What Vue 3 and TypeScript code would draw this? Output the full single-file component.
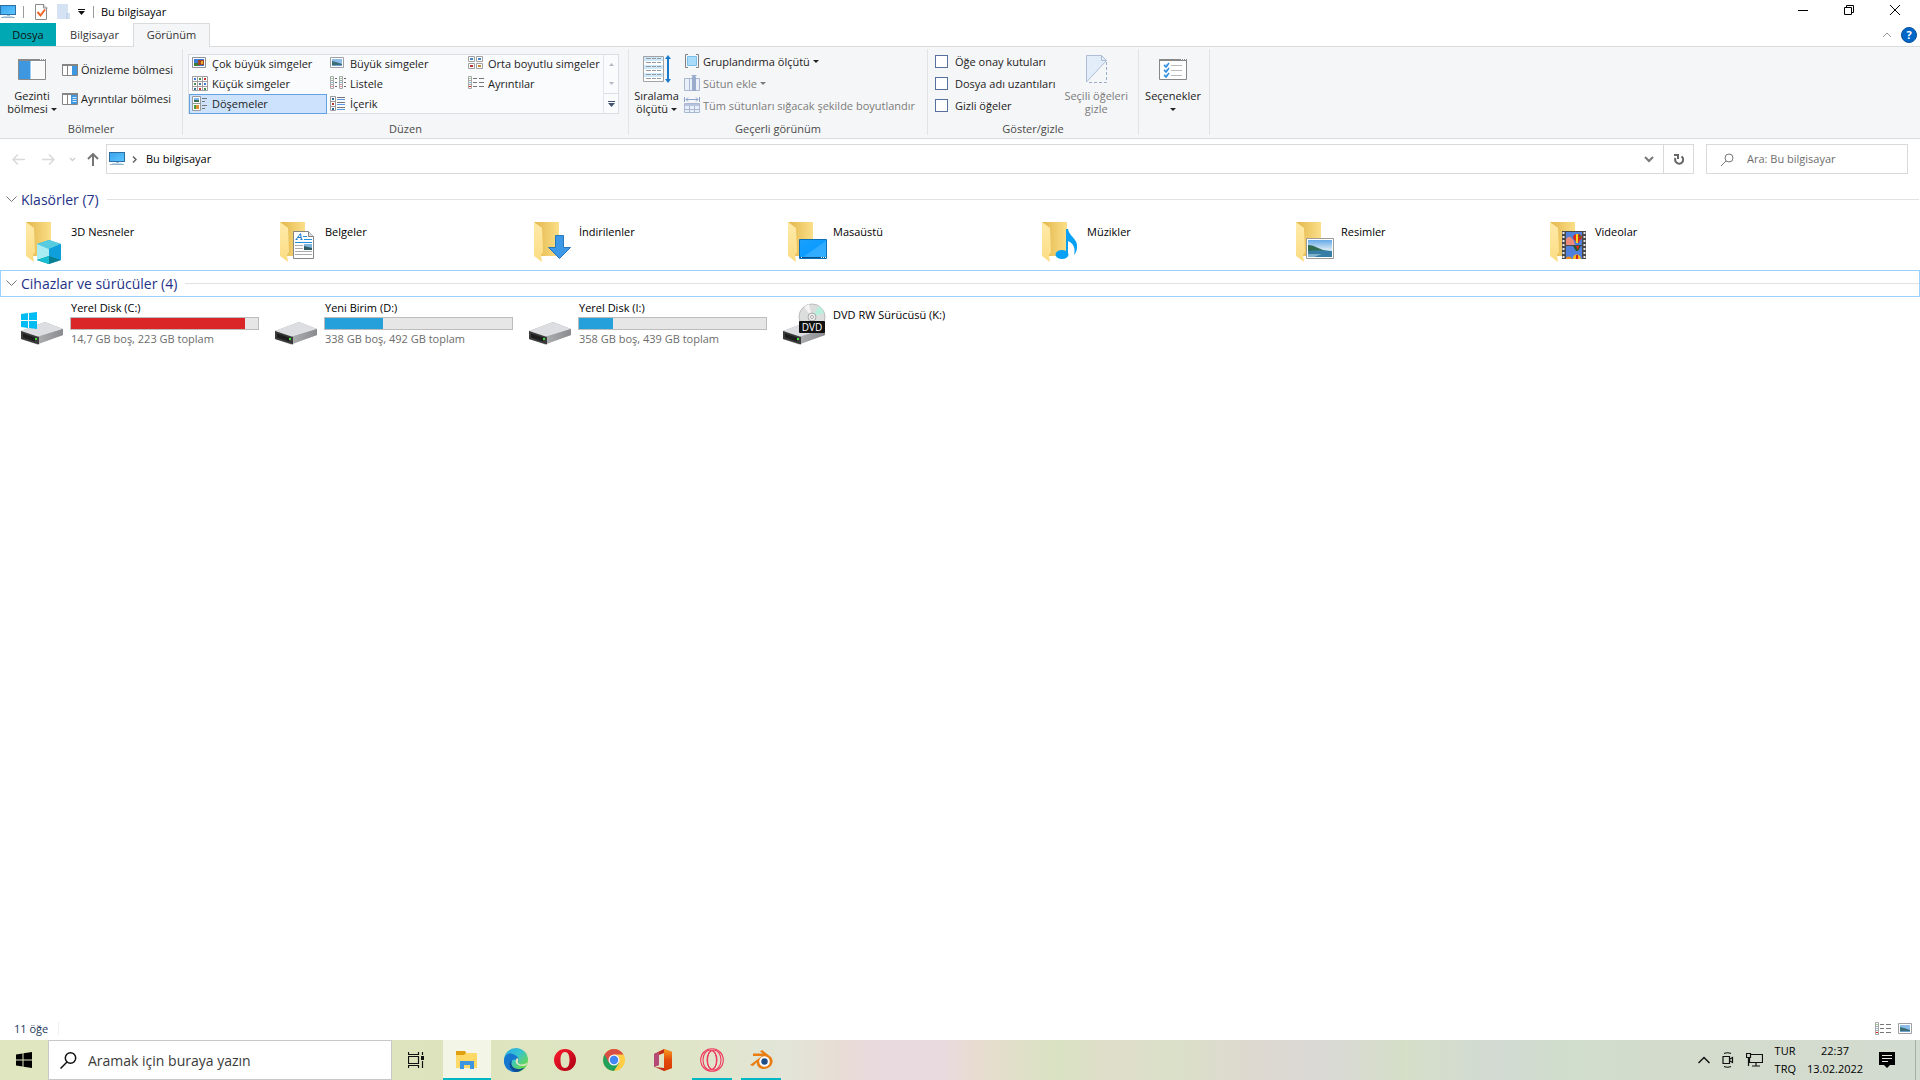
<script setup lang="ts">
import { ref } from 'vue'

const icons: Record<string, string> = {
  pc: '<path d="M0 1h16v10H0z" fill="#2b6fa5"/><path d="M1 2h14v8H1z" fill="url(#screen)"/><path d="M7 11h3v2H7z" fill="#9fc3da"/><path d="M1 13h14v1H1z" fill="#8fb3c9"/><path d="M3 12h10v1H3z" fill="#c8dbe6"/>',
  props: '<path d="M.5.5h8l3 3v12H.5z" fill="#fdfdfd" stroke="#8c8c8c"/><path d="M8.500 0v4h4" fill="#ddd" stroke="#8c8c8c"/><path d="M2.500 8l3 3.500L10 5.500" fill="none" stroke="#f06428" stroke-width="2"/>',
  newFolder: '<path d="M0 0h11v9h2v6H0z" fill="#d5e2f3"/><path d="M10 9v6" stroke="#b4c8e2"/>',
  large: '<path d="M.5 1.500h13v10H.5z" fill="#fff" stroke="#8e9297"/><path d="M2 3h10v7H2z" fill="#3b7bd6"/><path d="M2 7h5v3H2z" fill="#3f7a38"/><path d="M6 4h6v5H6z" fill="#a64126"/><path d="M9 5h2v3H9z" fill="#e0b52d"/>',
  big: '<path d="M.5 1.500h13v10H.5z" fill="#fff" stroke="#9da1a6"/><path d="M2 3h10v7H2z" fill="#8dbde9"/><path d="M2 5l4 1 6 2v2H2z" fill="#3c6f76"/><path d="M2 9h10v1H2z" fill="#70a0d0"/>',
  medium: '<g fill="#fff" stroke="#a0a0a0"><path d="M.5.5h6v5h-6zM8.500.5h6v5h-6zM.5 7.500h6v5h-6zM8.500 7.500h6v5h-6z"/></g><path d="M2 2h3v2H2zM10 2h3v2h-3z" fill="#4a86c6"/><path d="M2 9h3v2H2z" fill="#b33"/><path d="M10 9h3v2h-3z" fill="#c8872c"/>',
  small: '<g fill="#fff" stroke="#a0a0a0"><path d="M.5.5h15v14H.5zM5.500.5v14M10.500.5v14M.5 5.500h15M.5 10.500h15"/></g><path d="M2 2h2v2H2zM12 7h2v2h-2z" fill="#3b7bd6"/><path d="M7 2h2v2H7zM2 7h2v2H2zM12 12h2v2h-2z" fill="#4a8a4a"/><path d="M12 2h2v2h-2zM7 12h2v2H7z" fill="#c33"/><path d="M7 7h2v2H7zM2 12h2v2H2z" fill="#3c6f96"/>',
  list: '<g fill="#fff" stroke="#a8a8a8"><path d="M.5.5h3v12h-3zM9.500.5h3v12h-3zM.5 4.500h3M.5 8.500h3M9.500 4.500h3M9.500 8.500h3"/></g><path d="M5 2.500h2M5 6.500h2M5 10.500h2M14 2.500h2M14 6.500h2M14 10.500h2" stroke="#666"/><path d="M1.500 2h1v1h-1zM10.500 2h1v1h-1z" fill="#3a3"/><path d="M1.500 6h1v1h-1zM10.500 6h1v1h-1z" fill="#37c"/><path d="M1.500 10h1v1h-1zM10.500 10h1v1h-1z" fill="#d22"/>',
  details: '<path d="M.5.5h3v12h-3zM.5 4.500h3M.5 8.500h3" fill="#fff" stroke="#a8a8a8"/><path d="M5 2.500h4M11 2.500h5M5 6.500h4M11 6.500h5M5 10.500h4M11 10.500h5" stroke="#777"/><path d="M1.500 2h1v1h-1z" fill="#3a3"/><path d="M1.500 6h1v1h-1z" fill="#37c"/><path d="M1 10h2v1H1z" fill="#d22"/>',
  tiles: '<path d="M.5.5h8v14h-8zM.5 7.500h8" fill="#fff" stroke="#9a9a9a"/><path d="M2 2h5v4H2z" fill="#7db4ea"/><path d="M2 4h5v2H2z" fill="#3c6f56"/><path d="M2 9h3v4H2z" fill="#4a9a40"/><path d="M4 9h3v4H4z" fill="#dd8f35"/><path d="M10 2.500h5M10 5.500h3M10 9.500h5M10 12.500h3" stroke="#777"/>',
  content: '<path d="M.5.5h5v14h-5zM.5 5.500h5M.5 10.500h5" fill="#fff" stroke="#9a9a9a"/><path d="M2 2h2v2H2zM2 12h2v2H2z" fill="#37639c"/><path d="M2 7h2v2H2z" fill="#b33"/><path d="M7 1.500h8M7 6.500h8M7 11.500h8" stroke="#777"/><path d="M7 3.500h8M7 8.500h8M7 13.500h8" stroke="#5c9ae6"/>',
  navPane: '<path d="M.5.5h27v20H.5z" fill="#fff" stroke="#8a8a8a"/><path d="M0 0h28v2H0z" fill="#8a8a8a"/><path d="M22 0h1v1h-1zM24 0h1v1h-1zM26 0h1v1h-1z" fill="#fff"/><path d="M1 2h11v18H1z" fill="#3f97e0"/><path d="M12 2h1v18h-1z" fill="#9dccf3"/><path d="M14 3h13v17H14z" fill="#fafafa"/>',
  preview: '<path d="M.5.5h15v11H.5z" fill="#fff" stroke="#858585"/><path d="M0 0h16v2H0zM5 1h1v11H5z" fill="#858585"/><path d="M10 2h5v9h-5z" fill="#3f97e0"/>',
  detailPane: '<path d="M.5.5h15v11H.5z" fill="#fff" stroke="#858585"/><path d="M0 0h16v2H0zM5 1h1v11H5z" fill="#858585"/><path d="M9 2h6v9H9z" fill="#3f97e0"/><path d="M10.500 4.500h4M10.500 6.500h4M10.500 8.500h4" stroke="#d5eaff"/>',
  sort: '<path d="M.5 1.500h20v25H.5z" fill="#fff" stroke="#a3a3a3"/><path d="M1 2h19v4H1zM1 10h19v4H1zM1 18h19v4H1z" fill="#cce8fa"/><path d="M3 3.500h5m1 0h4m1 0h4M3 7.500h5m1 0h4m1 0h4M3 11.500h5m1 0h4m1 0h4M3 15.500h5m1 0h4m1 0h4M3 19.500h5m1 0h4m1 0h4M3 23.500h5m1 0h4m1 0h4" stroke="#999"/><path d="M25 3v22" stroke="#1979ca" stroke-width="2"/><path d="M22 4l3-4 3 4zM22 24l3 4 3-4z" fill="#1979ca"/>',
  group: '<path d="M3 .5H.5v13H3M11 .5h2.500v13H11" fill="none" stroke="#808080"/><path d="M2.500 2.500h9v9h-9z" fill="#a9dcfb" stroke="#7dbfe8"/>',
  addColumn: '<path d="M.5 3.500h15v12H.5zM5.500 3.500v12" fill="#e9f0fa" stroke="#a9b7d2"/><path d="M8 2h4v14H8z" fill="#9aaccc"/><path d="M7 0h6l-3 3z" fill="#9aaccc"/>',
  fit: '<path d="M.5 0v5M15.500 0v5M2 2.500h12M4 .5l-2 2 2 2M12 .5l2 2-2 2" fill="none" stroke="#8ea3c8"/><path d="M.5 6.500h15v9H.5zM5.500 8v8M10.500 8v8M0 12.500h16" fill="#e9f0fa" stroke="#a9b7d2"/><path d="M1 7h14v2H1z" fill="#b5c3dc"/>',
  hide: '<path d="M.5.5h15l5 5L.5 27z" fill="#e3edfa"/><path d="M.5 27V.5h15l5 5L.5 27M15.500.5v5h5" fill="none" stroke="#aebcd4"/><path d="M20.500 7v20.500H1" fill="none" stroke="#9aabc9" stroke-dasharray="3 2"/>',
  options: '<path d="M.5.5h27v20H.5z" fill="#fff" stroke="#888"/><path d="M0 0h28v2H0z" fill="#888"/><path d="M22 0h1v1h-1zM24 0h1v1h-1zM26 0h1v1h-1z" fill="#fff"/><path d="M5 5h4v3H5zM5 10h4v3H5zM5 15h4v3H5z" fill="#cfe5f8"/><path d="M5 6l2 2 3-4M5 11l2 2 3-4M5 16l2 2 3-4" fill="none" stroke="#2f8fe0" stroke-width="1.500"/><path d="M12 6.500h11M12 11.500h11M12 16.500h11" stroke="#bbb"/>',
  drive: '<path d="M4 32L28 23l18 7v6L20 45.500 4 40z" fill="#a5a5a7"/><path d="M4 32l24-9 18 7-26 8z" fill="#dddee1"/><path d="M20 38l26-8v6l-26 9z" fill="url(#side)"/><path d="M4 32l18 6v7.500L4 40z" fill="#3a3a3a"/><path d="M6 34.500l12 4v4l-12-4z" fill="#1d1d1d"/><path d="M18 39h2v2h-2z" fill="#3fe03f"/>'
}

const folder = '<path d="M9 4h25v34H15z" fill="url(#back)"/><path d="M9 4l8 6 1 24-2 3 1 7-8-6z" fill="url(#flap)"/>'

const overlays: Record<string, string> = {
  cube: '<path d="M20 26l12-4 12 4v16l-12 4-12-4z" fill="#19b5cf"/><path d="M20 26l12-4 12 4-12 5z" fill="#57cbe0"/><path d="M20 26l12 5v8l-12 3z" fill="#a9edf2"/><path d="M32 31l12-5v16l-12-4z" fill="#0f9fdc"/><path d="M20 42l12-4 12 4-12 4z" fill="#067f93"/><path d="M20 42l12-4v8z" fill="#18bfd0"/>',
  doc: '<path d="M22.500 13.500h15l5 5v22h-20z" fill="#fff" stroke="#858585"/><path d="M37.500 13.500v5h5" fill="#ddd" stroke="#858585"/><path d="M24.500 21.500h2M29.500 21.500h2M25.500 21l4-5.500 1 6M27 19.500h3" fill="none" stroke="#1979ca"/><path d="M32 18.500h4M33 21.500h8M24 24.500h17" stroke="#1e90dc"/><path d="M24 27.500h8M24 30.500h8M24 33.500h17M24 36.500h17" stroke="#aaa"/><path d="M33 26h8v6h-8z" fill="#7fb4dc"/><path d="M33 28l8 2v2h-8z" fill="#2f5c62"/>',
  down: '<path d="M30.500 17.500h8v12h7L34.500 40.500l-11-11h7z" fill="#3e98e8" stroke="#2778bd"/>',
  desktop: '<path d="M20.500 21.500h27v19h-27z" fill="url(#desk)" stroke="#0c70b8"/><path d="M21 39h26v1H21z" fill="#07528c"/><path d="M22 39h1v1h-1zM42 39h1v1h-1zM44 39h1v1h-1zM46 39h1v1h-1z" fill="#fff"/>',
  note: '<ellipse cx="29" cy="36.500" rx="6.500" ry="4.500" fill="#06a0f5"/><path d="M33 11h2c1 7 10 10 9 18 0 3-1 6-3 8 2-7-1-12-6-14v13h-2z" fill="#06a0f5"/>',
  picture: '<path d="M19.500 20.500h27v20h-27z" fill="#fff" stroke="#9b9b9b"/><path d="M21 22h24v17H21z" fill="url(#sky)"/><path d="M21 27c7 0 12 5 20 6l-20 2z" fill="#2f6b4e"/><path d="M21 33c8-1 16-1 24 0v6H21z" fill="#377ea6"/><path d="M21 36h14l-8 3h-6z" fill="#7fb3cb"/>',
  film: '<path d="M21 13h24v28H21z" fill="#484848"/><path d="M22.500 14v27M43.500 14v27" stroke="#e8e8e8" stroke-width="2" stroke-dasharray="2 2"/><path d="M25 14h16v13H25zM25 28h16v13H25z" fill="#4f80dc"/><path d="M25 21c2-3 5-3 6 0 2 0 2 4 3 6h-9z" fill="#ee8a7a"/><path d="M32 19c0-4 9-4 9 0 0 3-3 3-3 6h-3c0-3-3-3-3-6z" fill="#d9281c"/><path d="M35 16h2v9h-2z" fill="#f7d420"/><path d="M38 17h2l-1 4z" fill="#2a7a34"/><path d="M32 28h8l-3 5h-2z" fill="#2b5a2d"/><path d="M35 28h3l-1 4z" fill="#f22"/><path d="M25 40c2-2 4-2 6 1h-6z" fill="#f28c1c"/><path d="M32 41c-1-6 8-6 8 0z" fill="#f3b81b"/><path d="M35 37h2v4h-2z" fill="#c22"/>',
  windows: '<path d="M4 15l7-1v7H4zM12 14l8-1v8h-8zM4 22h7v7l-7-1zM12 22h8v8l-8-1z" fill="#00bcf2"/>',
  disc: '<circle cx="33" cy="18" r="13" fill="#dcdddd" stroke="#bbb"/><path d="M33 18L40 7a13 13 0 015 7z" fill="#b6f0dc"/><path d="M33 18l-8-10 5-3z" fill="#f4f4f4"/><circle cx="33" cy="18" r="4" fill="#eee" stroke="#aaa"/><circle cx="33" cy="18" r="1.500" fill="#fff" stroke="#aaa"/><rect x="20" y="22" width="26" height="12" rx="1" fill="#111"/><text x="33" y="32" text-anchor="middle" font-size="10" font-family="Open Sans, sans-serif" fill="#fff">DVD</text>'
}

const apps = [
  { name: 'Dosya Gezgini', state: 'active', svg: '<path d="M1 3h9l1 2h-10z" fill="#d99a08"/><path d="M1 5h21v15H1z" fill="#ffd967"/><path d="M1 3h8l2 2-2 2H1z" fill="#e0a00d"/><path d="M5 13h14v8h-4v-4H9v4H5z" fill="#3d95df"/>' },
  { name: 'Edge', state: '', svg: '<circle cx="12" cy="12" r="12" fill="url(#edge)"/><path d="M0 12C1 5 7 4 11 7c4 2 4 5 3 7-1-3-7-4-7 2 0 4 5 7 9 7C8 27-1 20 0 12z" fill="#1677cf"/><path d="M8 12c-3 7 5 12 13 7-3 4-7 5-10 5-6-3-7-9-3-12z" fill="#0e4c94"/><path d="M13 10c3 1 0 4 1 5 3 3 8 1 10-1-1 3-3 4-5 4-7 0-9-5-6-8z" fill="#dee5c0"/>' },
  { name: 'Opera', state: '', svg: '<path fill-rule="evenodd" d="M12 1a11 11 0 110 22 11 11 0 010-22zm0 3c-3 0-4.500 3-4.500 8s1.500 8 4.500 8 4.500-3 4.500-8S15 4 12 4z" fill="url(#opera)"/>' },
  { name: 'Chrome', state: '', svg: '<circle cx="12" cy="12" r="11" fill="#ffcd46"/><path d="M12 12L2.500 6.500A11 11 0 0012 23l5-8z" fill="#20a15c"/><path d="M2.500 6.500a11 11 0 0119 0H12L7 15z" fill="#d94f43"/><circle cx="12" cy="12" r="5.500" fill="#f4f4f4"/><circle cx="12" cy="12" r="4.200" fill="#4285f4"/>' },
  { name: 'Office', state: '', svg: '<path d="M3 6l10-5 8 3v16l-8 3-9-4 9 1V5L8 7v10l-5 2z" fill="#c42b1a"/><path d="M3 6l5-2v13l-5 2z" fill="#b54a76"/><path d="M13 1l8 3v16l-8 3z" fill="url(#office)"/>' },
  { name: 'Opera GX', state: 'open', svg: '<g fill="none" stroke="#f0385d" stroke-width="1.100"><circle cx="12" cy="12" r="11.300"/><ellipse cx="10" cy="12" rx="7" ry="10"/><ellipse cx="14" cy="12" rx="7" ry="10"/><ellipse cx="12" cy="12" rx="4.500" ry="9.500"/></g>' },
  { name: 'Blender', state: 'open', svg: '<path d="M1 17L13 8H4V5.500h10L11 3.500l2-1.500 9 7c4 5 0 12-7 12-5 0-8-4-7-7l-4 4z" fill="#ea7d12"/><circle cx="15.500" cy="13.500" r="5.300" fill="#fff"/><circle cx="15.500" cy="13.500" r="3.200" fill="#1d4f86"/>' }
]

const views = [
  { label: 'Çok büyük simgeler', icon: 'large' },
  { label: 'Büyük simgeler', icon: 'big' },
  { label: 'Orta boyutlu simgeler', icon: 'medium' },
  { label: 'Küçük simgeler', icon: 'small' },
  { label: 'Listele', icon: 'list' },
  { label: 'Ayrıntılar', icon: 'details' },
  { label: 'Döşemeler', icon: 'tiles' },
  { label: 'İçerik', icon: 'content' }
]
const selectedView = ref('Döşemeler')

const toggles = ref([
  { label: 'Öğe onay kutuları', on: false },
  { label: 'Dosya adı uzantıları', on: false },
  { label: 'Gizli öğeler', on: false }
])

const folders = [
  { name: '3D Nesneler', overlay: 'cube' },
  { name: 'Belgeler', overlay: 'doc' },
  { name: 'İndirilenler', overlay: 'down' },
  { name: 'Masaüstü', overlay: 'desktop' },
  { name: 'Müzikler', overlay: 'note' },
  { name: 'Resimler', overlay: 'picture' },
  { name: 'Videolar', overlay: 'film' }
]

const drives = [
  { name: 'Yerel Disk (C:)', free: '14,7 GB boş, 223 GB toplam', used: 93, overlay: 'windows' },
  { name: 'Yeni Birim (D:)', free: '338 GB boş, 492 GB toplam', used: 31, overlay: '' },
  { name: 'Yerel Disk (I:)', free: '358 GB boş, 439 GB toplam', used: 18, overlay: '' },
  { name: 'DVD RW Sürücüsü (K:)', free: '', used: 0, overlay: 'disc' }
]
const foldersOpen = ref(true)
const drivesOpen = ref(true)
const query = ref('')
const taskQuery = ref('')
</script>

<template>
  <div class="screen">
    <svg class="defs" width="0" height="0" aria-hidden="true">
      <defs>
        <linearGradient id="screen" x2="1" y2="1"><stop stop-color="#3aa5ee" /><stop offset="1" stop-color="#5cc5ff" /></linearGradient>
        <linearGradient id="back"><stop stop-color="#e3b64a" /><stop offset="1" stop-color="#fbdf89" /></linearGradient>
        <linearGradient id="flap" x2="0" y2="1"><stop stop-color="#ffeaa9" /><stop offset="1" stop-color="#fbdc83" /></linearGradient>
        <linearGradient id="side"><stop stop-color="#aeafb1" /><stop offset="1" stop-color="#8a8b8e" /></linearGradient>
        <linearGradient id="desk" x2="1" y2="1"><stop stop-color="#1ba1fb" /><stop offset=".5" stop-color="#0c9bff" /><stop offset=".55" stop-color="#2fabff" /><stop offset="1" stop-color="#35aeff" /></linearGradient>
        <linearGradient id="sky" x2="0" y2="1"><stop stop-color="#66a9e8" /><stop offset=".6" stop-color="#dcecf5" /></linearGradient>
        <linearGradient id="edge" y2="1" x2="1"><stop stop-color="#2aa9e0" /><stop offset=".4" stop-color="#35c1d5" /><stop offset=".8" stop-color="#66d854" /></linearGradient>
        <linearGradient id="opera" y2="1"><stop stop-color="#ff1b2d" /><stop offset="1" stop-color="#a70014" /></linearGradient>
        <linearGradient id="office" x2="0" y2="1"><stop stop-color="#f9a01e" /><stop offset=".5" stop-color="#e2480c" /><stop offset="1" stop-color="#d83b01" /></linearGradient>
      </defs>
    </svg>

    <header class="titlebar">
      <svg class="app-icon" width="16" height="16" v-html="icons.pc" />
      <span class="bar" />
      <button class="quick" aria-label="Özellikler"><svg width="13" height="16" v-html="icons.props" /></button>
      <button class="quick" aria-label="Yeni klasör"><svg width="13" height="16" v-html="icons.newFolder" /></button>
      <button class="quick small" aria-label="Hızlı Erişim Araç Çubuğunu Özelleştir">
        <svg width="7" height="6"><path d="M0 .5h7" stroke="#111" /><path d="M0 2h7L3.500 6z" fill="#111" /></svg>
      </button>
      <span class="bar" />
      <h1>Bu bilgisayar</h1>
      <div class="window-buttons">
        <button aria-label="Simge durumuna küçült"><svg width="10" height="10"><path d="M0 5.500h10" stroke="#000" /></svg></button>
        <button aria-label="Önceki Boyut"><svg width="10" height="10"><path d="M.5 2.500h7v7h-7zM2.500 2.500v-2h7v7h-2" fill="none" stroke="#000" /></svg></button>
        <button aria-label="Kapat"><svg width="10" height="10"><path d="M0 0l10 10M10 0L0 10" stroke="#000" /></svg></button>
      </div>
    </header>

    <nav class="tabs" aria-label="Şerit">
      <button class="file">Dosya</button>
      <button class="computer">Bilgisayar</button>
      <button class="current">Görünüm</button>
      <div class="tab-tools">
        <button aria-label="Şeridi küçült"><svg width="10" height="6"><path d="M1 5l4-4 4 4" fill="none" stroke="#999" /></svg></button>
        <button class="help" aria-label="Yardım">?</button>
      </div>
    </nav>

    <section class="ribbon">
      <div class="group panes">
        <div class="tools">
          <button class="tall">
            <span class="glyph"><svg width="28" height="21" v-html="icons.navPane" /></span>
            <span>Gezinti<br />bölmesi <i class="caret" /></span>
          </button>
          <div class="stack two">
            <button class="line"><svg width="16" height="12" v-html="icons.preview" />Önizleme bölmesi</button>
            <button class="line"><svg width="16" height="12" v-html="icons.detailPane" />Ayrıntılar bölmesi</button>
          </div>
        </div>
        <h2>Bölmeler</h2>
      </div>

      <div class="group layout">
        <div class="tools">
          <div class="gallery">
            <div class="views">
              <button v-for="v in views" :key="v.label" :class="{ chosen: v.label === selectedView }" @click="selectedView = v.label">
                <svg width="16" height="15" v-html="icons[v.icon]" />{{ v.label }}
              </button>
            </div>
            <div class="scroller">
              <button aria-label="Yukarı"><svg width="5" height="3"><path d="M0 3h5L2.500 0z" fill="#b5bac4" /></svg></button>
              <button aria-label="Aşağı"><svg width="5" height="3"><path d="M0 0h5L2.500 3z" fill="#b5bac4" /></svg></button>
              <button class="more" aria-label="Diğer"><svg width="7" height="6"><path d="M0 .5h7" stroke="#44546f" /><path d="M0 2h7L3.500 6z" fill="#44546f" /></svg></button>
            </div>
          </div>
        </div>
        <h2>Düzen</h2>
      </div>

      <div class="group current-view">
        <div class="tools">
          <button class="tall">
            <span class="glyph"><svg width="28" height="28" v-html="icons.sort" /></span>
            <span>Sıralama<br />ölçütü <i class="caret" /></span>
          </button>
          <div class="stack">
            <button class="line"><svg width="16" height="16" viewBox="-1 -1 16 16" v-html="icons.group" />Gruplandırma ölçütü <i class="caret" /></button>
            <button class="line" disabled><svg width="16" height="16" v-html="icons.addColumn" />Sütun ekle <i class="caret" /></button>
            <button class="line" disabled><svg width="16" height="16" v-html="icons.fit" />Tüm sütunları sığacak şekilde boyutlandır</button>
          </div>
        </div>
        <h2>Geçerli görünüm</h2>
      </div>

      <div class="group show">
        <div class="tools">
          <div class="stack">
            <label v-for="t in toggles" :key="t.label" class="line check"><input v-model="t.on" type="checkbox" />{{ t.label }}</label>
          </div>
          <button class="tall" disabled>
            <span class="glyph"><svg width="21" height="28" v-html="icons.hide" /></span>
            <span>Seçili öğeleri<br />gizle</span>
          </button>
        </div>
        <h2>Göster/gizle</h2>
      </div>

      <div class="group options">
        <div class="tools">
          <button class="tall">
            <span class="glyph"><svg width="28" height="21" v-html="icons.options" /></span>
            <span>Seçenekler<br /><i class="caret" /></span>
          </button>
        </div>
      </div>
    </section>

    <div class="navigation">
      <button class="arrow" aria-label="Geri" disabled><svg width="13" height="11"><path d="M13 5.500H1M6 .5l-5 5 5 5" fill="none" stroke="#d9d9d9" stroke-width="1.500" /></svg></button>
      <button class="arrow" aria-label="İleri" disabled><svg width="13" height="11"><path d="M0 5.500h12M7 .5l5 5-5 5" fill="none" stroke="#d9d9d9" stroke-width="1.500" /></svg></button>
      <button class="arrow recent" aria-label="Son konumlar"><svg width="7" height="5"><path d="M1 1l2.500 2.500L6 1" fill="none" stroke="#d0d0d0" stroke-width="1.500" /></svg></button>
      <button class="arrow up" aria-label="Yukarı"><svg width="12" height="13"><path d="M6 13V1M1 6l5-5 5 5" fill="none" stroke="#767676" stroke-width="2" /></svg></button>
      <div class="address">
        <svg width="16" height="16" v-html="icons.pc" />
        <svg class="crumb" width="5" height="7"><path d="M1 .5l3 3-3 3" fill="none" stroke="#666" stroke-width="1.500" /></svg>
        <a href="#">Bu bilgisayar</a>
        <button class="history" aria-label="Önceki Konumlar"><svg width="10" height="7"><path d="M1 1l4 4 4-4" fill="none" stroke="#777" stroke-width="2" /></svg></button>
        <button class="refresh" aria-label="Yenile"><svg width="10" height="12"><path d="M1.500 5a4 4 0 107-.5L7.500 3.500" fill="none" stroke="#666" stroke-width="2" /><path d="M0 1h5v5H3V3H0z" fill="#666" /></svg></button>
      </div>
      <label class="search">
        <svg width="13" height="13"><circle cx="8" cy="5" r="4" fill="none" stroke="#777" /><path d="M5 8l-5 5" stroke="#777" /></svg>
        <input v-model="query" type="text" placeholder="Ara: Bu bilgisayar" aria-label="Ara: Bu bilgisayar" />
      </label>
    </div>

    <main>
      <button class="heading" :aria-expanded="foldersOpen" @click="foldersOpen = !foldersOpen">
        <svg width="11" height="7"><path d="M.5.5l5 5 5-5" fill="none" stroke="#777" /></svg>Klasörler (7)<span class="rule" />
      </button>
      <ul v-if="foldersOpen">
        <li v-for="f in folders" :key="f.name">
          <svg width="48" height="48" v-html="folder + overlays[f.overlay]" />
          <div class="info"><span>{{ f.name }}</span></div>
        </li>
      </ul>
      <button class="heading focused" :aria-expanded="drivesOpen" @click="drivesOpen = !drivesOpen">
        <svg width="11" height="7"><path d="M.5.5l5 5 5-5" fill="none" stroke="#777" /></svg>Cihazlar ve sürücüler (4)<span class="rule" />
      </button>
      <ul v-if="drivesOpen" class="drives">
        <li v-for="d in drives" :key="d.name">
          <svg width="48" height="48" v-html="icons.drive + (overlays[d.overlay] || '')" />
          <div class="info" :class="{ full: d.free }">
            <span>{{ d.name }}</span>
            <template v-if="d.free">
              <div class="meter"><div class="fill" :class="{ low: d.used > 90 }" :style="{ width: d.used + '%' }" /></div>
              <small>{{ d.free }}</small>
            </template>
          </div>
        </li>
      </ul>
    </main>

    <footer class="status">
      <span class="count">11 öğe</span>
      <div class="modes">
        <button aria-label="Ayrıntılar"><svg width="16" height="13" v-html="icons.details" /></button>
        <button aria-label="Büyük simgeler"><svg width="14" height="13" v-html="icons.big" /></button>
      </div>
    </footer>

    <div class="taskbar">
      <button class="start" aria-label="Başlat"><svg width="16" height="16"><path d="M0 2.500l6.500-1v6H0zM7.500 1.300L16 0v7.500H7.500zM0 8.500h6.500v6L0 13.500zM7.500 8.500H16V16l-8.500-1.300z" fill="#000" /></svg></button>
      <label class="task-search">
        <svg width="17" height="17"><circle cx="10.500" cy="6" r="5.200" fill="none" stroke="#111" stroke-width="1.500" /><path d="M7 10l-6.500 6.500" stroke="#111" stroke-width="1.500" /></svg>
        <input v-model="taskQuery" type="text" placeholder="Aramak için buraya yazın" aria-label="Aramak için buraya yazın" />
      </label>
      <button class="task-view" aria-label="Görev Görünümü"><svg width="16" height="16"><path d="M.5 0v2.500h10V0M.5 4.500h10v7H.5zM.5 16v-2.500h10V16M14.500 0v3M14.500 9v7" fill="none" stroke="#111" stroke-width="1.200" /><path d="M13 4h3v4h-3z" fill="#111" /></svg></button>
      <button v-for="a in apps" :key="a.name" class="app" :class="a.state" :aria-label="a.name"><svg width="24" height="24" v-html="a.svg" /></button>
      <div class="tray">
        <button aria-label="Gizli simgeleri göster"><svg width="12" height="8"><path d="M.5 7L6 1.500 11.500 7" fill="none" stroke="#111" stroke-width="1.500" /></svg></button>
        <button aria-label="Kamera"><svg width="12" height="16"><path d="M1 4.500h6.500v7H1zM8 7l2.500-1.500v5L8 9M2 1.500q3.500-1.500 7 0M2 14.500q3.500 1.500 7 0" fill="none" stroke="#111" stroke-width="1.200" /></svg></button>
        <button aria-label="Ağ"><svg width="17" height="14"><path d="M5 1.500h11.500v8H3.500V5M.5.500h4v4h-4zM10 9.500v3M6 13h8M2.500 5v8" fill="none" stroke="#111" stroke-width="1.200" /></svg></button>
        <button class="language">TUR<br />TRQ</button>
        <button class="clock">22:37<br />13.02.2022</button>
        <button class="notify" aria-label="Bildirimler"><svg width="16" height="16"><path d="M0 0h16v13h-5l-3 3-3-3H0z" fill="#000" /><path d="M3 3.500h10M3 6.500h10M3 9.500h6" stroke="#e4e8dd" /></svg></button>
        <span class="peek" />
      </div>
    </div>
  </div>
</template>

<style>
body {
  margin: 0;
  background: #fff;
}
</style>

<style scoped>
* {
  box-sizing: border-box;
}
.screen {
  display: flex;
  flex-direction: column;
  min-height: 100vh;
  background: #fff;
  color: #000;
  font: 11px/13px "Open Sans", "Noto Sans", sans-serif;
}
.defs {
  position: absolute;
}
svg {
  display: block;
  flex: none;
}
button {
  display: flex;
  align-items: center;
  justify-content: center;
  margin: 0;
  padding: 0;
  border: 0;
  background: none;
  color: inherit;
  font: inherit;
}
input {
  font: inherit;
}
h1, h2 {
  margin: 0;
  font: inherit;
}
.titlebar {
  display: flex;
  align-items: center;
  height: 23px;
}
.bar {
  width: 1px;
  height: 12px;
  margin-left: 7px;
  background: #9a9a9a;
}
.quick {
  margin-left: 11px;
}
.quick + .quick {
  margin-left: 9px;
}
.quick.small + .bar {
  margin-left: 8px;
}
.quick + .quick.small {
  margin-left: 8px;
}
.titlebar h1 {
  margin-left: 7px;
}
.window-buttons {
  display: flex;
  height: 20px;
  margin-left: auto;
  padding-right: 2px;
  align-self: flex-start;
}
.window-buttons button {
  width: 46px;
}
.tabs {
  display: flex;
  height: 24px;
  border-bottom: 1px solid #dadbdc;
  color: #333;
}
.file {
  width: 56px;
  background: #00a8b3;
  color: #111;
}
.computer {
  width: 77px;
}
.tabs .current {
  width: 77px;
  height: 24px;
  padding-bottom: 2px;
  border: 1px solid #dadbdc;
  border-bottom: 0;
  background: #f5f6f7;
}
.tab-tools {
  display: flex;
  align-items: center;
  gap: 9px;
  margin-left: auto;
  padding-right: 3px;
}
.help {
  width: 16px;
  height: 16px;
  border: 1px solid #0a4d9a;
  border-radius: 50%;
  background: #0067c8;
  color: #fff;
  font-weight: 700;
}
.ribbon {
  display: flex;
  height: 92px;
  padding: 2px 0 3px;
  border-bottom: 1px solid #dadbdc;
  background: #f5f6f7;
  color: #222;
}
.group {
  display: flex;
  flex: none;
  flex-direction: column;
  justify-content: space-between;
  border-right: 1px solid #e2e3e4;
}
.group h2 {
  color: #4a4a4a;
  text-align: center;
}
.tools {
  display: flex;
}
.panes { width: 183px; }
.layout { width: 446px; }
.current-view { width: 299px; }
.show { width: 211px; }
.options { width: 71px; }
.tall {
  flex-direction: column;
  justify-content: flex-start;
  padding-top: 3px;
  white-space: nowrap;
}
.glyph {
  display: flex;
  align-items: center;
  justify-content: center;
  height: 34px;
  margin-bottom: 3px;
}
.panes .tall {
  width: 64px;
}
.current-view .tall {
  width: 55px;
}
.show .tall {
  width: 82px;
  margin: 0 1px 0 auto;
}
.options .tall {
  width: 68px;
}
.caret {
  display: inline-block;
  border: 3px solid transparent;
  border-top-color: currentColor;
  border-bottom: 0;
  vertical-align: 2px;
}
.stack {
  display: flex;
  flex-direction: column;
  align-items: flex-start;
  padding-top: 1px;
}
.line {
  display: flex;
  align-items: center;
  height: 22px;
  gap: 3px;
  white-space: nowrap;
}
.two {
  padding-top: 6px;
}
.panes .line {
  width: 116px;
  height: 29px;
  margin-left: -2px;
  justify-content: flex-start;
}
button:disabled {
  color: #7c7c7c;
}
.check {
  gap: 7px;
  margin-left: 7px;
}
.check input {
  appearance: none;
  width: 13px;
  height: 13px;
  margin: 0;
  border: 1px solid #56719d;
  background: #fff;
}
.gallery {
  display: flex;
  width: 431px;
  height: 60px;
  margin: 5px 0 0 5px;
  border: 1px solid #dcdfe2;
  background: #fafbfd;
}
.views {
  display: grid;
  grid-template-columns: repeat(3, 138px);
  grid-template-rows: repeat(3, 20px);
  margin-top: -1px;
}
.views button {
  justify-content: flex-start;
  height: 20px;
  padding: 0 0 1px 2px;
  gap: 4px;
  border: 1px solid transparent;
  white-space: nowrap;
}
.views .chosen {
  border-color: #62a2e4;
  background: #cde2fc;
}
.scroller {
  flex: 1;
  border-left: 1px solid #e3e5e8;
}
.scroller button {
  width: 100%;
  height: 19px;
}
.scroller .more {
  height: 20px;
  border-top: 1px solid #dcdfe2;
}
.navigation {
  display: flex;
  align-items: center;
  height: 40px;
  padding: 0 12px;
}
.arrow {
  margin-right: 17px;
}
.arrow.recent {
  margin: 0 11px 0 -3px;
}
.arrow.up {
  margin-right: 7px;
}
.address {
  display: flex;
  flex: 1;
  align-items: center;
  height: 30px;
  padding-left: 2px;
  border: 1px solid #d9d9d9;
}
.crumb {
  margin: 0 9px 0 7px;
}
.address a {
  padding-bottom: 2px;
  color: #000;
  text-decoration: none;
}
.history {
  width: 28px;
  height: 28px;
  margin-left: auto;
}
.refresh {
  width: 30px;
  height: 28px;
  border-left: 1px solid #d9d9d9;
}
.search {
  display: flex;
  align-items: center;
  width: 202px;
  height: 30px;
  margin-left: 12px;
  padding-left: 14px;
  border: 1px solid #d9d9d9;
}
.search input {
  width: 150px;
  margin-left: 13px;
  padding: 0 0 2px;
  border: 0;
  outline: 0;
}
.search input::placeholder {
  color: #6d6d6d;
  opacity: 1;
}
main {
  flex: 1;
  padding-top: 7px;
}
.heading {
  width: 100%;
  height: 27px;
  padding-left: 5px;
  gap: 4px;
  border: 1px solid transparent;
  color: #1e3287;
  font-size: 14px;
  line-height: 20px;
  white-space: nowrap;
}
.heading.focused {
  border-color: #99d1ff;
}
.rule {
  flex: 1;
  height: 1px;
  margin-left: 4px;
  background: #e2e2e2;
}
ul {
  display: flex;
  flex-wrap: wrap;
  margin: 0;
  padding: 5px 0 4px 17px;
  list-style: none;
}
.drives {
  padding-top: 2px;
}
li {
  display: flex;
  width: 254px;
  height: 48px;
}
.info {
  width: 189px;
  margin-left: 5px;
  padding-top: 7px;
}
.drives .info {
  padding-top: 9px;
}
.drives .full {
  padding-top: 2px;
}
.info span, .info small {
  display: block;
  padding-left: 1px;
}
.info small {
  color: #6d6d6d;
  font-size: 11px;
}
.meter {
  height: 13px;
  margin: 3px 0 2px;
  border: 1px solid #bcbcbc;
  background: #e6e6e6;
}
.fill {
  height: 100%;
  background: #26a0da;
}
.fill.low {
  background: #da2626;
}
.status {
  display: flex;
  align-items: center;
  height: 24px;
  padding: 0 8px 0 14px;
  color: #1e395b;
}
.count {
  padding-right: 10px;
  border-right: 1px solid #f0f0f0;
}
.modes {
  display: flex;
  gap: 7px;
  margin-left: auto;
}
.taskbar {
  display: flex;
  height: 40px;
  background: linear-gradient(90deg, #e0e6bf 0%, #dde4bd 25%, #dfe5c6 35%, #e2e5d8 41%, #e8dcd5 44%, #e9dae0 46%, #e8dadf 49%, #e7dccf 51%, #d9e3c2 55%, #dfddca 58%, #dae0c7 61%, #ded9d0 65%, #dad9d6 69%, #d5dfc8 73%, #d2dad3 78%, #d0ddcd 81%, #d3dccc 86%, #d2dbcf 100%);
}
.start {
  width: 48px;
}
.task-search {
  display: flex;
  align-items: center;
  width: 344px;
  padding-left: 11px;
  border: 1px solid #c8c8c8;
  background: #fff;
}
.task-search input {
  flex: 1;
  margin-left: 11px;
  padding: 1px 0 0;
  border: 0;
  outline: 0;
  font-size: 14px;
  line-height: 20px;
}
.task-search input::placeholder {
  color: #3a3a3a;
  opacity: 1;
}
.task-view {
  width: 50px;
  padding-right: 2px;
}
.app {
  position: relative;
  width: 48px;
  margin-left: 1px;
}
.active {
  background: #f3f5e6;
}
.active::after, .open::after {
  content: "";
  position: absolute;
  right: 0;
  bottom: 0;
  left: 0;
  height: 2px;
  background: #00b7c3;
}
.open::after {
  right: 4px;
  left: 4px;
}
.tray {
  display: flex;
  align-items: center;
  gap: 12px;
  margin-left: auto;
  font-size: 11px;
  line-height: 18px;
}
.tray .language {
  text-align: left;
}
.clock {
  width: 54px;
}
.notify {
  margin-left: 5px;
}
.peek {
  width: 5px;
  height: 40px;
  margin-left: 8px;
  border-left: 1px solid #a9b0a6;
}
</style>
